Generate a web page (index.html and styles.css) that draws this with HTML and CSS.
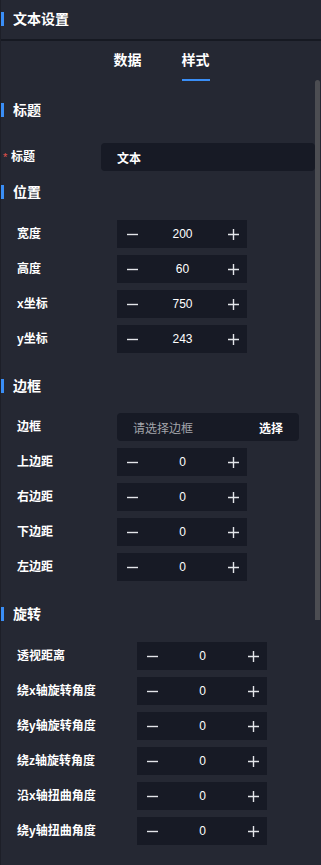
FILE: index.html
```html
<!DOCTYPE html>
<html lang="zh-CN">
<head>
<meta charset="utf-8">
<title>文本设置</title>
<link rel="stylesheet" href="styles.css">
</head>
<body>
<div class="panel">
  <div class="header"><span class="bar-title">文本设置</span></div>
  <div class="tabs">
    <div class="tab">数据</div>
    <div class="tab active">样式</div>
  </div>
  <div class="body">
    <section class="sec">
      <h3 class="sec-title t-first">标题</h3>
      <div class="rows r-first">
        <div class="row row-req">
          <span class="req">*</span>
          <span class="label label-req">标题</span>
          <div class="text-input">文本</div>
        </div>
      </div>
    </section>

    <section class="sec">
      <h3 class="sec-title t-near">位置</h3>
      <div class="rows r-21">
        <div class="row"><span class="label">宽度</span><div class="stepper"><svg class="ico" viewBox="0 0 11 11"><path d="M0 5.5H11"/></svg><span class="val">200</span><svg class="ico" viewBox="0 0 11 11"><path d="M0 5.5H11M5.5 0V11"/></svg></div></div>
        <div class="row"><span class="label">高度</span><div class="stepper"><svg class="ico" viewBox="0 0 11 11"><path d="M0 5.5H11"/></svg><span class="val">60</span><svg class="ico" viewBox="0 0 11 11"><path d="M0 5.5H11M5.5 0V11"/></svg></div></div>
        <div class="row"><span class="label">x坐标</span><div class="stepper"><svg class="ico" viewBox="0 0 11 11"><path d="M0 5.5H11"/></svg><span class="val">750</span><svg class="ico" viewBox="0 0 11 11"><path d="M0 5.5H11M5.5 0V11"/></svg></div></div>
        <div class="row"><span class="label">y坐标</span><div class="stepper"><svg class="ico" viewBox="0 0 11 11"><path d="M0 5.5H11"/></svg><span class="val">243</span><svg class="ico" viewBox="0 0 11 11"><path d="M0 5.5H11M5.5 0V11"/></svg></div></div>
      </div>
    </section>

    <section class="sec">
      <h3 class="sec-title t-far">边框</h3>
      <div class="rows r-20">
        <div class="row"><span class="label">边框</span><div class="select"><span class="placeholder">请选择边框</span><span class="select-btn">选择</span></div></div>
        <div class="row"><span class="label">上边距</span><div class="stepper"><svg class="ico" viewBox="0 0 11 11"><path d="M0 5.5H11"/></svg><span class="val">0</span><svg class="ico" viewBox="0 0 11 11"><path d="M0 5.5H11M5.5 0V11"/></svg></div></div>
        <div class="row"><span class="label">右边距</span><div class="stepper"><svg class="ico" viewBox="0 0 11 11"><path d="M0 5.5H11"/></svg><span class="val">0</span><svg class="ico" viewBox="0 0 11 11"><path d="M0 5.5H11M5.5 0V11"/></svg></div></div>
        <div class="row"><span class="label">下边距</span><div class="stepper"><svg class="ico" viewBox="0 0 11 11"><path d="M0 5.5H11"/></svg><span class="val">0</span><svg class="ico" viewBox="0 0 11 11"><path d="M0 5.5H11M5.5 0V11"/></svg></div></div>
        <div class="row"><span class="label">左边距</span><div class="stepper"><svg class="ico" viewBox="0 0 11 11"><path d="M0 5.5H11"/></svg><span class="val">0</span><svg class="ico" viewBox="0 0 11 11"><path d="M0 5.5H11M5.5 0V11"/></svg></div></div>
      </div>
    </section>

    <section class="sec">
      <h3 class="sec-title t-far">旋转</h3>
      <div class="rows r-21 wide">
        <div class="row"><span class="label">透视距离</span><div class="stepper"><svg class="ico" viewBox="0 0 11 11"><path d="M0 5.5H11"/></svg><span class="val">0</span><svg class="ico" viewBox="0 0 11 11"><path d="M0 5.5H11M5.5 0V11"/></svg></div></div>
        <div class="row"><span class="label">绕x轴旋转角度</span><div class="stepper"><svg class="ico" viewBox="0 0 11 11"><path d="M0 5.5H11"/></svg><span class="val">0</span><svg class="ico" viewBox="0 0 11 11"><path d="M0 5.5H11M5.5 0V11"/></svg></div></div>
        <div class="row"><span class="label">绕y轴旋转角度</span><div class="stepper"><svg class="ico" viewBox="0 0 11 11"><path d="M0 5.5H11"/></svg><span class="val">0</span><svg class="ico" viewBox="0 0 11 11"><path d="M0 5.5H11M5.5 0V11"/></svg></div></div>
        <div class="row"><span class="label">绕z轴旋转角度</span><div class="stepper"><svg class="ico" viewBox="0 0 11 11"><path d="M0 5.5H11"/></svg><span class="val">0</span><svg class="ico" viewBox="0 0 11 11"><path d="M0 5.5H11M5.5 0V11"/></svg></div></div>
        <div class="row"><span class="label">沿x轴扭曲角度</span><div class="stepper"><svg class="ico" viewBox="0 0 11 11"><path d="M0 5.5H11"/></svg><span class="val">0</span><svg class="ico" viewBox="0 0 11 11"><path d="M0 5.5H11M5.5 0V11"/></svg></div></div>
        <div class="row"><span class="label">绕y轴扭曲角度</span><div class="stepper"><svg class="ico" viewBox="0 0 11 11"><path d="M0 5.5H11"/></svg><span class="val">0</span><svg class="ico" viewBox="0 0 11 11"><path d="M0 5.5H11M5.5 0V11"/></svg></div></div>
      </div>
    </section>
  </div>
  <div class="scrollbar"></div>
</div>
</body>
</html>
```

FILE: styles.css
```css
* { box-sizing: border-box; }
html, body {
  margin: 0;
  padding: 0;
  width: 321px;
  height: 865px;
  overflow: hidden;
  background: #252833;
}
body {
  font-family: "Liberation Sans", "Noto Sans CJK SC", sans-serif;
  color: #ffffff;
  font-size: 12px;
}
.panel {
  position: relative;
  width: 321px;
  height: 865px;
  border-left: 1px solid #1d1f28;
  background: #252833;
}
.header {
  height: 41px;
  border-bottom: 2px solid #161922;
  display: flex;
  align-items: center;
  padding-bottom: 0;
}
.bar-title,
.sec-title {
  display: flex;
  align-items: center;
  font-size: 14px;
  font-weight: 700;
  line-height: 14px;
  height: 14px;
  margin: 0;
}
.bar-title::before,
.sec-title::before {
  content: "";
  width: 3px;
  height: 14px;
  background: #3a8ef6;
  margin-right: 9px;
}
.header .bar-title { margin-top: -1px; }
.tabs {
  display: flex;
  justify-content: center;
  gap: 40px;
  padding-left: 1px;
}
.tab {
  font-size: 14px;
  font-weight: 700;
  line-height: 20px;
  padding: 9px 0 9px;
  border-bottom: 2px solid transparent;
}
.tab.active { border-bottom-color: #3a8ef6; }
.t-first { margin-top: 22px; }
.t-near { margin-top: 14px; }
.t-far { margin-top: 26px; }
.rows {
  display: flex;
  flex-direction: column;
  gap: 7px;
}
.r-first { margin-top: 26px; }
.r-21 { margin-top: 21px; }
.r-20 { margin-top: 20px; }
.row {
  display: flex;
  align-items: center;
  height: 28px;
  padding-left: 16px;
}
.label {
  width: 100px;
  flex: none;
  font-weight: 700;
  font-size: 12px;
  line-height: 16px;
}
.wide .label { width: 120px; }
.row-req { padding-left: 1px; padding-right: 6px; }
.req {
  width: 9px;
  flex: none;
  color: #e5534b;
  font-size: 11px;
  line-height: 11px;
  align-self: flex-start;
  margin-top: 9px;
  padding-left: 1px;
}
.label-req { width: 90px; }
.text-input {
  flex: 1;
  height: 28px;
  border-radius: 4px;
  background: #171a25;
  display: flex;
  align-items: center;
  padding-left: 16px;
  font-weight: 700;
}
.stepper {
  width: 130px;
  height: 28px;
  background: #171a25;
  display: flex;
  align-items: center;
  padding: 0 8px 0 10px;
}
.ico {
  width: 11px;
  height: 11px;
  flex: none;
  fill: none;
  stroke: #e4e6ea;
  stroke-width: 1.4;
}
.val {
  flex: 1;
  text-align: center;
  font-size: 12px;
  line-height: 16px;
  color: #ffffff;
  padding-right: 1px;
}
.select {
  width: 182px;
  height: 28px;
  border-radius: 4px;
  background: #171a25;
  display: flex;
  align-items: center;
  justify-content: space-between;
  padding: 0 16px;
}
.placeholder { color: #a3a5ab; }
.select-btn { font-weight: 700; }
.scrollbar {
  position: absolute;
  right: 1px;
  top: 80px;
  width: 5px;
  height: 540px;
  border-radius: 3px 3px 0 0;
  background: #4c4d52;
}
```
